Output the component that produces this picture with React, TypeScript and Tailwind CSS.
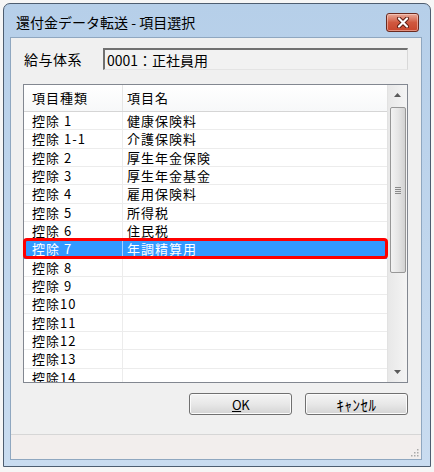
import React from 'react'

const rows: [string, string][] = [
  ['控除 1', '健康保険料'],
  ['控除 1-1', '介護保険料'],
  ['控除 2', '厚生年金保険'],
  ['控除 3', '厚生年金基金'],
  ['控除 4', '雇用保険料'],
  ['控除 5', '所得税'],
  ['控除 6', '住民税'],
  ['控除 7', '年調精算用'],
  ['控除 8', ''],
  ['控除 9', ''],
  ['控除10', ''],
  ['控除11', ''],
  ['控除12', ''],
  ['控除13', ''],
  ['控除14', ''],
]

const CloseButton = () => (
  <div className="w-[33px] h-[19px] rounded-[3px] border border-[#6b2a1f] bg-linear-to-b from-[#e8a999] via-[#d0583f] to-[#c8452c] shadow-[inset_0_0_0_1px_rgba(255,220,210,0.5)] flex items-center justify-center">
    <svg width="14" height="11" viewBox="0 0 14 11">
      <path d="M3 1.5 L11 9.5 M11 1.5 L3 9.5" stroke="#5a1a10" strokeWidth="4" strokeLinecap="round" />
      <path d="M3 1.5 L11 9.5 M11 1.5 L3 9.5" stroke="#ffffff" strokeWidth="2.2" strokeLinecap="round" />
    </svg>
  </div>
)

const Scrollbar = () => (
  <div className="w-[20px] h-full bg-linear-to-r from-[#e8e8e8] to-[#f4f4f4] border-l border-[#e2e2e2] flex flex-col items-center">
    <div className="h-[20px] w-full flex items-center justify-center">
      <svg width="7" height="4" viewBox="0 0 7 4"><path d="M0 4 L3.5 0 L7 4 Z" fill="#5a5a5a" /></svg>
    </div>
    <div className="mt-[2px] h-[166px] w-[16px] rounded-[2px] border border-[#979797] bg-linear-to-r from-[#f3f3f3] via-[#e6e6e6] to-[#d2d2d2] flex items-center justify-center">
      <svg width="6" height="7" viewBox="0 0 6 7">
        <path d="M0 0.5 H6 M0 2.5 H6 M0 4.5 H6 M0 6.5 H6" stroke="#8a8a8a" strokeWidth="1" />
      </svg>
    </div>
    <div className="flex-1" />
    <div className="h-[20px] w-full flex items-center justify-center">
      <svg width="7" height="4" viewBox="0 0 7 4"><path d="M0 0 L3.5 4 L7 0 Z" fill="#5a5a5a" /></svg>
    </div>
  </div>
)

const Button = ({ children }: { children: React.ReactNode }) => (
  <div className="w-[103px] h-[22px] rounded-[3px] border border-[#707070] bg-linear-to-b from-[#f4f4f4] via-[#e8e8e8] to-[#d4d4d4] shadow-[inset_0_0_0_1px_#fbfbfb] flex items-center justify-center text-[13px] text-black leading-none">
    {children}
  </div>
)

export default function App() {
  return (
    <div className="w-[434px] h-[472px] bg-[#f6f6f6] pt-[3px] pl-[3px] font-['Noto_Sans_CJK_JP',sans-serif]">
      <div className="w-[428px] h-[464px] rounded-t-[7px] border border-[#4d5d70] bg-linear-to-b from-[#b6cfe9] to-[#c9dcf0] flex flex-col">
        {/* title bar */}
        <div className="h-[33px] flex items-center justify-between pl-[12px] pr-[11px] pt-[3px]">
          <span className="text-[14px] text-black leading-none">還付金データ転送 - 項目選択</span>
          <CloseButton />
        </div>

        {/* client */}
        <div className="ml-[6px] w-[412px] h-[423px] bg-[#f0f0f0] border border-[#8fa7c0] flex flex-col">
          <div className="mt-[10px] h-[22px] flex items-center pl-[13px]">
            <span className="w-[79px] text-[14px] tracking-[0.5px] text-black">給与体系</span>
            <div className="w-[305px] h-[22px] border-t-2 border-l-2 border-r border-b border-t-[#707070] border-l-[#707070] border-r-[#d8d8d8] border-b-[#e4e4e4] bg-[#f2f2f2] flex items-center pl-[2px] text-[14px] text-black leading-none">
              0001：正社員用
            </div>
          </div>

          {/* list */}
          <div className="relative mt-[14px] ml-[12px] w-[385px] h-[299px] border border-[#828790] bg-white flex">
            <div className="flex-1 flex flex-col overflow-hidden">
              <div className="h-[27px] shrink-0 flex border-b border-[#d5d5d5] bg-linear-to-b from-[#ffffff] to-[#f7f8f9] text-[13px] tracking-[1px] text-black">
                <div className="w-[99px] border-r border-[#e5e5e5] pl-[8px] flex items-center">項目種類</div>
                <div className="flex-1 pl-[4px] flex items-center">項目名</div>
              </div>
              {rows.map(([kind, name], i) => {
                const sel = i === 7
                return (
                  <div
                    key={kind}
                    className={`h-[18.33px] shrink-0 flex border-b text-[13px] tracking-[1px] leading-none ${sel ? 'bg-[#3399ff] text-white border-[#3399ff]' : 'text-black border-[#ececec]'}`}
                  >
                    <div className={`w-[99px] border-r pl-[8px] flex items-center whitespace-pre ${sel ? 'border-[#a8d0ff]' : 'border-[#ececec]'}`}>{kind}</div>
                    <div className="flex-1 pl-[4px] flex items-center">{name}</div>
                  </div>
                )
              })}
            </div>
            <Scrollbar />
            {/* highlight annotation */}
            <div className="absolute left-[-1px] top-[153px] w-[365px] h-[21px] border-[3px] border-[#ff0000] rounded-[4px]" />
          </div>

          <div className="mt-[10px] flex gap-[13px] pl-[178px]">
            <Button><span className="tracking-[-0.5px]"><span className="underline">O</span>K</span></Button>
            <Button><span className="text-[15px] tracking-[0.5px]">ｷｬﾝｾﾙ</span></Button>
          </div>

          <div className="flex-1" />

          {/* status bar */}
          <div className="h-[25px] border-t border-[#d6d6d6] bg-[#f2eeed] flex justify-end items-end pr-[2px] pb-[2px]">
            <svg width="10" height="10" viewBox="0 0 10 10">
              <g fill="#a9a9a9">
                <rect x="8" y="2" width="1.5" height="1.5" />
                <rect x="5" y="5" width="1.5" height="1.5" />
                <rect x="8" y="5" width="1.5" height="1.5" />
                <rect x="2" y="8" width="1.5" height="1.5" />
                <rect x="5" y="8" width="1.5" height="1.5" />
                <rect x="8" y="8" width="1.5" height="1.5" />
              </g>
            </svg>
          </div>
        </div>
      </div>
    </div>
  )
}
